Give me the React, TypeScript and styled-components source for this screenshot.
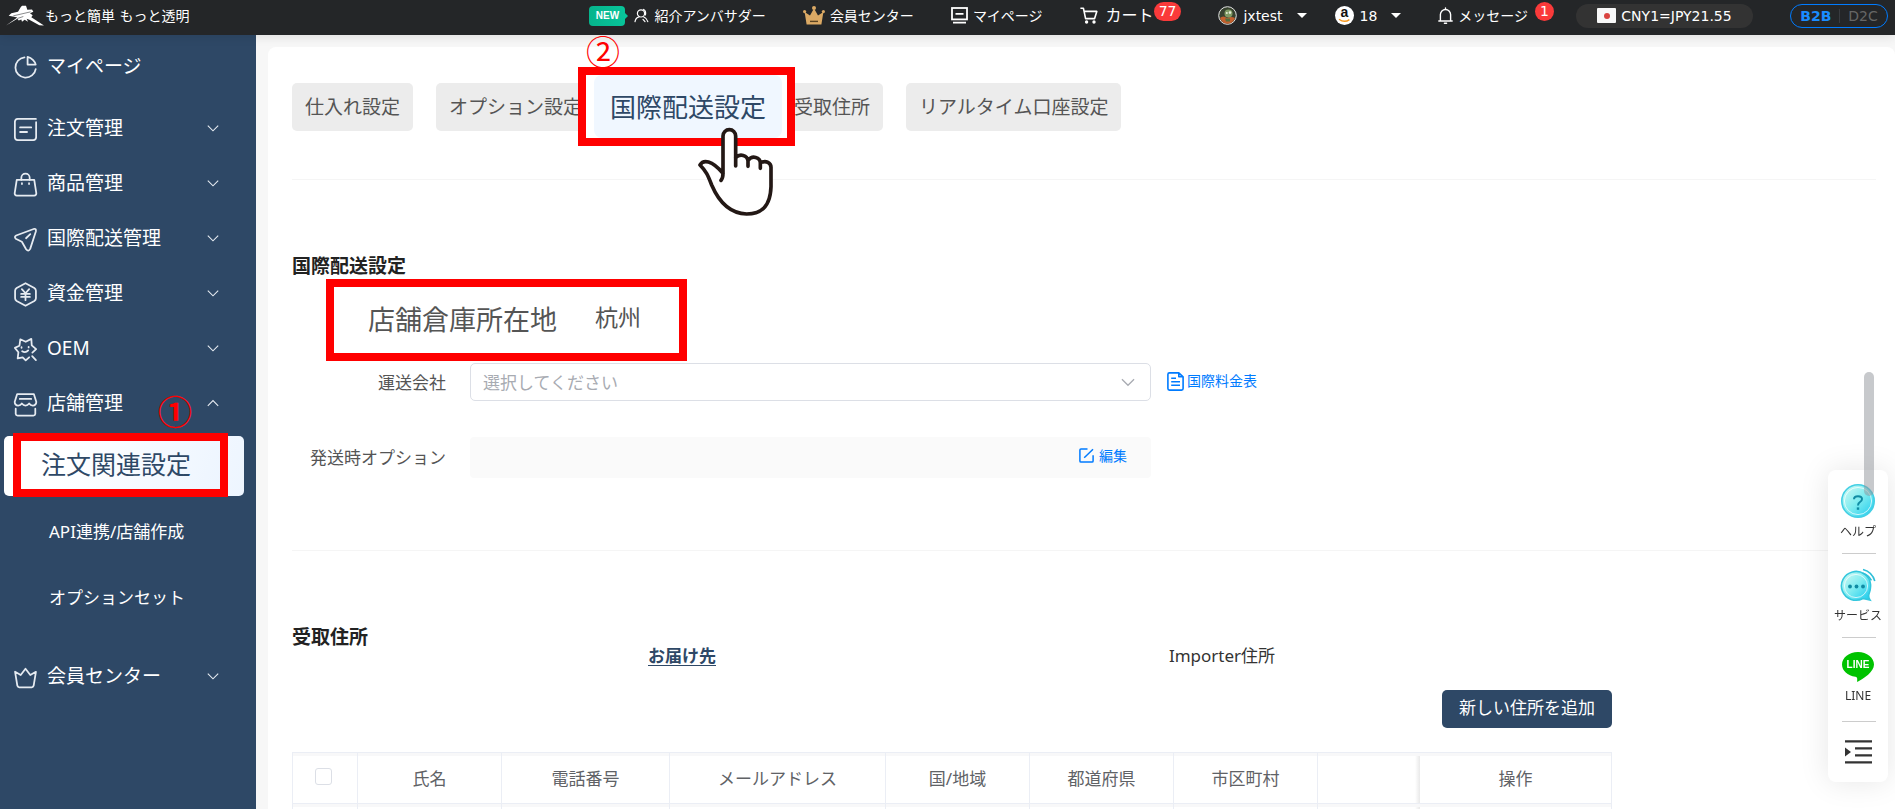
import React from "react";
import styled, { createGlobalStyle, css } from "styled-components";

const navy = "#2e4866";
const red = "#ff0000";
const blue = "#007bff";
const sans = `"Noto Sans", "Noto Sans CJK JP", sans-serif`;
const wide = `"DejaVu Sans", "Noto Sans CJK JP", sans-serif`;

const Global = createGlobalStyle`
  *, *::before, *::after { box-sizing: border-box; }
  html { scrollbar-width: none; }
  body { margin: 0; font-family: ${sans}; color: #333; background: #f7f7f7; }
  button, input, select { font: inherit; color: inherit; margin: 0; }
  button { border: 0; background: none; padding: 0; cursor: pointer; }
  a { color: inherit; text-decoration: none; }
  ul { list-style: none; margin: 0; padding: 0; }
  svg { display: block; flex: none; }
`;

const Shell = styled.div`
  display: flex;
  flex-direction: column;
  min-height: 100vh;
`;

/* ---------- header ---------- */

const Header = styled.header`
  display: flex;
  align-items: center;
  justify-content: space-between;
  flex: none;
  height: 35px;
  padding: 0 7px 4px 6px;
  background: #242628;
  color: #fff;
  font-family: ${wide};
  font-size: 14px;
  line-height: 22px;
  box-shadow: 0 2px 10px rgba(0, 0, 0, 0.1);
  position: sticky;
  top: 0;
  z-index: 2;
  white-space: nowrap;
`;

const Brand = styled.a`
  display: flex;
  align-items: center;
  gap: 1px;
`;

const Nav = styled.nav`
  display: flex;
  align-items: center;
  gap: 37px;
`;

const NavGroup = styled.div<{ $gap: number }>`
  display: flex;
  align-items: center;
  gap: ${(p) => p.$gap}px;
`;

const NavLink = styled.a<{ $gap?: number; $large?: boolean }>`
  display: flex;
  align-items: center;
  gap: ${(p) => p.$gap ?? 5}px;
  font-size: ${(p) => (p.$large ? 16 : 14)}px;
`;

const NavButton = styled.button`
  display: flex;
  align-items: center;
  gap: 6px;
`;

const Caret = styled.span`
  border: 5px solid transparent;
  border-top-color: #fff;
  border-bottom: 0;
  margin-left: 8px;
`;

const NewTag = styled.span`
  position: relative;
  width: 36px;
  height: 20px;
  border-radius: 4px;
  background: linear-gradient(90deg, #06b48c, #08c49a);
  font: 700 10px/20px "Liberation Sans", sans-serif;
  text-align: center;
  margin-right: 4px;
  &::after {
    content: "";
    position: absolute;
    left: 36px;
    top: 7px;
    border: 3px solid transparent;
    border-left-color: #08c49a;
  }
`;

const Count = styled.span<{ $inset?: boolean }>`
  align-self: flex-start;
  min-width: 18px;
  height: 19px;
  padding: 0 5px;
  border-radius: 10px;
  background: #fa3a3a;
  font-size: 14px;
  line-height: 18px;
  text-align: center;
  margin-left: ${(p) => (p.$inset ? -8 : 2)}px;
  margin-top: -3px;
`;

const Rate = styled.div`
  display: flex;
  align-items: center;
  justify-content: center;
  gap: 5px;
  width: 177px;
  height: 24px;
  border-radius: 12px;
  background: #333;
`;

const Flag = styled.span`
  display: grid;
  place-items: center;
  width: 19px;
  height: 15px;
  border-radius: 1px;
  background: #f8f8f8;
  &::after {
    content: "";
    width: 6px;
    height: 6px;
    border-radius: 50%;
    background: #d9433f;
  }
`;

const Mode = styled.div`
  display: flex;
  align-items: center;
  justify-content: center;
  width: 98px;
  height: 24px;
  border: 1px solid ${blue};
  border-radius: 12px;
`;

const ModeButton = styled.button<{ $on?: boolean }>`
  padding: 0 8px;
  line-height: 14px;
  color: ${(p) => (p.$on ? "#1a8cff" : "#666")};
  font-weight: ${(p) => (p.$on ? 700 : 400)};
  & + & {
    border-left: 1px solid #383b40;
  }
`;

/* ---------- sidebar ---------- */

const Body = styled.div`
  display: flex;
  flex: 1;
`;

const Sidebar = styled.aside`
  flex: none;
  width: 256px;
  padding-top: 3px;
  background: ${navy};
  color: #fff;
`;

const MenuLink = styled.button<{ $after?: number }>`
  display: flex;
  align-items: center;
  width: 100%;
  height: 55px;
  padding: 0 37px 0 13px;
  margin-bottom: ${(p) => p.$after ?? 0}px;
  gap: 9px;
  font-size: 19px;
  line-height: 28px;
  text-align: left;
  svg:first-child {
    position: relative;
    top: 2px;
  }
`;

const MenuText = styled.span`
  flex: 1;
  white-space: nowrap;
`;

const SubMenu = styled.ul`
  padding: 6px 12px 14px 4px;
`;

const SubItem = styled.li`
  position: relative;
  margin-bottom: 6px;
`;

const SubLink = styled.a<{ $on?: boolean }>`
  display: flex;
  align-items: center;
  height: 60px;
  padding-left: 45px;
  border-radius: 5px;
  font-size: 17px;
  line-height: 24px;
  ${(p) =>
    p.$on &&
    css`
      padding-left: 0;
      color: ${navy};
      background: linear-gradient(110deg, #fff 20%, #edf5ff);
    `}
`;

/* ---------- tutorial marks ---------- */

const markBox = css`
  border: 8px solid ${red};
  white-space: nowrap;
`;

const MenuMark = styled.span`
  ${markBox}
  position: absolute;
  left: 9px;
  top: -3px;
  width: 215px;
  height: 64px;
  padding-left: 20px;
  background: linear-gradient(110deg, #fff 20%, #edf5ff);
  font-size: 25px;
  line-height: 46px;
`;

const StepNumber = styled.span<{ $bold?: boolean }>`
  position: absolute;
  color: ${red};
  font-family: "Noto Sans CJK JP", sans-serif;
  font-size: 34px;
  line-height: 34px;
  font-weight: ${(p) => (p.$bold ? 700 : 400)};
`;

const MenuStep = styled(StepNumber)`
  right: 52px;
  top: -42px;
`;

/* ---------- main ---------- */

const Main = styled.main`
  flex: 1;
  min-width: 0;
  padding: 12px 0 0 12px;
  background: #f7f7f7;
`;

const Card = styled.div`
  min-height: 100%;
  padding: 36px 19px 0 24px;
  border-radius: 8px;
  background: #fff;
`;

const Tabs = styled.div`
  display: flex;
  gap: 23px;
  padding-bottom: 48px;
  border-bottom: 1px solid #f5f5f5;
`;

const Tab = styled.button`
  height: 48px;
  padding: 0 13px;
  border-radius: 5px;
  background: #ececec;
  color: #555;
  font-size: 19px;
  line-height: 28px;
  white-space: nowrap;
`;

const TabSlot = styled.div`
  position: relative;
  width: 140px;
`;

const TabMark = styled.div`
  ${markBox}
  position: absolute;
  left: -40px;
  top: -16px;
  width: 217px;
  height: 79px;
  padding: 0 5px 0 8px;
  background: #fff;
`;

const ActiveTab = styled.button`
  width: 100%;
  height: 63px;
  border-radius: 8px;
  background: #f0f7ff;
  color: ${navy};
  font-size: 26px;
  line-height: 36px;
`;

const TabStep = styled(StepNumber)`
  left: -32px;
  top: -49px;
  z-index: 3;
`;

const Pointer = styled.svg`
  position: absolute;
  left: 79px;
  top: 44px;
`;

const Section = styled.section<{ $ruled?: boolean }>`
  padding: 76px 0 72px;
  border-bottom: ${(p) => (p.$ruled ? "1px solid #f5f5f5" : "0")};
`;

const Title = styled.h2`
  margin: 0;
  color: #222;
  font-size: 19px;
  line-height: 20px;
  font-weight: 700;
`;

const Warehouse = styled.div`
  ${markBox}
  display: flex;
  align-items: center;
  gap: 38px;
  width: 361px;
  height: 82px;
  margin: 3px 0 2px 34px;
  padding: 0 0 0 34px;
  color: #555;
  font-size: 27px;
  line-height: 36px;
`;

const WarehouseCity = styled.span`
  font-size: 23px;
  line-height: 28px;
  margin-bottom: 6px;
`;

const Field = styled.div`
  display: flex;
  align-items: center;
  & + & {
    margin-top: 36px;
  }
`;

const FieldLabel = styled.label`
  flex: none;
  width: 178px;
  padding: 1px 24px 0 0;
  color: #555;
  font-size: 17px;
  line-height: 24px;
  text-align: right;
`;

const SelectWrap = styled.div`
  position: relative;
  flex: 0 1 681px;
  svg {
    position: absolute;
    right: 16px;
    top: 12px;
    pointer-events: none;
  }
`;

const Select = styled.select`
  display: block;
  width: 100%;
  height: 38px;
  padding: 0 12px;
  border: 1px solid #dcdfe6;
  border-radius: 5px;
  background: #fff;
  color: #a8abb2;
  font-size: 17px;
  appearance: none;
`;

const OptionBox = styled.div`
  display: flex;
  flex: 0 1 681px;
  align-items: center;
  justify-content: flex-end;
  height: 41px;
  padding: 0 24px 4px;
  border-radius: 4px;
  background: #fafafa;
`;

const actionStyle = css`
  display: flex;
  align-items: center;
  color: ${blue};
  font-size: 14px;
  line-height: 20px;
  white-space: nowrap;
`;

const PriceLink = styled.a`
  ${actionStyle}
  gap: 3px;
  margin-left: 16px;
  padding-bottom: 2px;
`;

const EditButton = styled.button`
  ${actionStyle}
  gap: 5px;
`;

const AddressPane = styled.div`
  width: 1320px;
  max-width: 100%;
`;

const AddressTabs = styled.div`
  display: grid;
  grid-template-columns: 1fr 1fr;
  justify-items: center;
  padding: 0 120px;
  margin-bottom: 25px;
`;

const AddressTab = styled.button<{ $on?: boolean }>`
  font-size: 17px;
  line-height: 18px;
  color: ${(p) => (p.$on ? navy : "#333")};
  font-weight: ${(p) => (p.$on ? 700 : 400)};
  text-decoration: ${(p) => (p.$on ? "underline" : "none")};
  text-underline-offset: 3px;
`;

const AddButton = styled.button`
  display: block;
  width: 170px;
  height: 38px;
  margin: 0 0 24px auto;
  padding-bottom: 2px;
  border-radius: 5px;
  background: ${navy};
  color: #fff;
  font-size: 17px;
  line-height: 24px;
`;

const Table = styled.table`
  width: 100%;
  table-layout: fixed;
  border-spacing: 0;
  border-top: 1px solid #ebeef5;
  border-left: 1px solid #ebeef5;
  color: #606266;
  font-size: 17px;
  line-height: 24px;
`;

const cell = css<{ $open?: boolean; $pinned?: boolean }>`
  position: relative;
  height: 51px;
  padding: 2px 0 0;
  border-right: ${(p) => (p.$open ? "0" : "1px solid #ebeef5")};
  border-bottom: 1px solid #ebeef5;
  box-shadow: inset 0 3px 0 #f8f8f9;
  text-align: center;
  font-weight: 400;
  ${(p) =>
    p.$pinned &&
    css`
      &::before {
        content: "";
        position: absolute;
        left: -5px;
        top: 3px;
        bottom: 0;
        width: 5px;
        background: linear-gradient(90deg, transparent, #e9e9e9);
      }
    `}
`;

const Th = styled.th`
  ${cell}
`;

const Td = styled.td`
  ${cell}
`;

const Check = styled.input`
  appearance: none;
  display: block;
  width: 17px;
  height: 17px;
  margin: 0 auto 5px 22px;
  border: 1px solid #dcdfe6;
  border-radius: 3px;
  background: #fff;
`;

/* ---------- floating parts ---------- */

const ScrollThumb = styled.div`
  position: fixed;
  z-index: 5;
  right: 21px;
  top: 372px;
  width: 10px;
  height: 124px;
  border-radius: 5px;
  background: rgba(144, 147, 153, 0.5);
`;

const Dock = styled.aside`
  position: fixed;
  z-index: 4;
  right: 7px;
  bottom: 27px;
  width: 60px;
  height: 312px;
  border-radius: 8px;
  background: #fff;
  box-shadow: 0 0 30px rgba(0, 0, 0, 0.1);
  color: #333;
  font-size: 12px;
`;

const DockItem = styled.button`
  position: relative;
  display: flex;
  flex-direction: column;
  align-items: center;
  justify-content: flex-start;
  width: 100%;
  height: 84px;
  padding-top: 14px;
  line-height: 18px;
  gap: 5px;
  white-space: nowrap;
  &::after {
    content: "";
    position: absolute;
    left: 14px;
    right: 12px;
    bottom: 0;
    height: 1px;
    background: #ccc;
  }
  &:last-child {
    height: 60px;
    padding-top: 18px;
  }
  &:last-child::after {
    display: none;
  }
`;

/* ---------- drawings ---------- */

const iconPaths: Record<string, React.ReactNode> = {
  pie: (
    <>
      <path d="M11 2.2A9.8 9.8 0 1 0 21.8 13.5" />
      <path d="M14 1.8V9.2H21.8C21.4 6.6 18.2 2.6 14 1.8Z" />
    </>
  ),
  order: (
    <>
      <path d="M22 1.8H4.5A3 3 0 0 0 1.8 4.5V19.5A3 3 0 0 0 4.5 22.2H19.5A3 3 0 0 0 22.2 19.5V5" />
      <path d="M6.8 10H17.5M6.8 14.4H13.5" />
    </>
  ),
  bag: (
    <>
      <path d="M3.6 7.5H20.4L22.4 20.5Q22.4 22.6 20.4 22.6H3.6Q1.6 22.6 1.6 20.5Z" />
      <path d="M8 7.5V5.5A4 4 0 0 1 16 5.5V7.5" />
      <path d="M8.6 10.8V11.6M15.4 10.8V11.6" />
    </>
  ),
  send: (
    <>
      <path d="M20.5 1.7L3 8.2Q.9 9.4 2.6 11.2L8.5 14.2L12.6 21.3Q14.8 24 16.5 21L22 4Q22.3 1.6 20.5 1.7Z" />
      <path d="M12.5 10.8L16.6 6.8" />
    </>
  ),
  yen: (
    <>
      <path d="M12 1.2L20.5 5.8Q22 6.8 22 8.4V15.6Q22 17.2 20.5 18.2L12 22.8L3.5 18.2Q2 17.2 2 15.6V8.4Q2 6.8 3.5 5.8Z" />
      <path d="M8.5 6.8L12 10.8L15.5 6.8M12 10.8V17.4M7.8 11.4H16.2M7.8 14.3H16.2" />
    </>
  ),
  oem: (
    <>
      <path d="M15.5 19.5L12.2 22.4L9.3 19.5L4.5 20.6L5.2 14.6L1.8 10.4L6.2 8.4L7 2.2L12.2 4.6L17.6 1.8L18 8L22.2 11.6L18.6 15" />
      <path d="M8.2 9.8V10.4M15 9.4V10M8.8 13.6Q12 15.8 14.6 12.8M18.4 18.4L22 22.2" />
    </>
  ),
  store: (
    <>
      <path d="M4 2H20L22.4 9.5Q22.2 13 19 13Q16.8 13 15.5 11Q14 13 12 13Q10 13 8.5 11Q7.2 13 5 13Q1.8 13 1.6 9.5Z" />
      <path d="M6.5 6.6H17.5M2.6 16V21Q2.8 22.6 4.4 22.6H19.6Q21.2 22.6 21.4 21V16" />
    </>
  ),
  crown: (
    <path d="M2 6.5L4.2 20Q4.6 21.4 6 21.4H18Q19.4 21.4 19.8 20L22 6.5L16.6 9.6L12 3.6L7.4 9.6Z" />
  ),
};

const LineIcon = ({ name }: { name: string }) => (
  <svg width="25" height="25" viewBox="0 0 24 24" fill="none" stroke="#e6ebf1" strokeWidth="1.7" strokeLinecap="round" strokeLinejoin="round" aria-hidden="true">
    {iconPaths[name]}
  </svg>
);

const Chevron = ({ up, color = "#e6ebf1", size = 12 }: { up?: boolean; color?: string; size?: number }) => (
  <svg width={size} height={size} viewBox="0 0 12 12" fill="none" stroke={color} strokeWidth="1.1" aria-hidden="true">
    <path d={up ? "M.8 8.8L6 3.6L11.2 8.8" : "M.8 3.6L6 8.8L11.2 3.6"} />
  </svg>
);

const Logo = () => (
  <svg width="38" height="21" viewBox="18 16 114 62" aria-hidden="true">
    <path fill="#fff" d="M18 77L52 53L42 51L26 48L34 40L54 36L62 22L66 18H78L82 30L96 29L100 36L90 40L98 46L94 52L132 77L118 76L88 60L80 57L84 66L74 60L66 66L64 59L56 62L52 57Z" />
    <path stroke="#242628" strokeWidth="1.6" d="M40 48L92 36M52 56L70 50" />
  </svg>
);

const Hand = () => (
  <Pointer width="77" height="90" viewBox="411 381 231 270" fill="#fff" stroke="#231815" strokeWidth="11" strokeLinecap="round" strokeLinejoin="round" aria-hidden="true">
    <path stroke="none" d="M489 518V408A19 19 0 0 1 527 408V470Q550 455 564 480Q585 462 601 487Q634 480 633 505V560C631 620 605 642 560 642C500 640 470 590 455 555C445 530 440 515 420 495C430 478 455 480 489 518Z" />
    <path fill="none" d="M483 541Q489 535 489 520V408A19 19 0 0 1 527 408V498M527 473C540 459 562 466 564 482V499M565 480C577 465 600 472 601 488V505M602 488C618 480 634 488 633 504V560C631 620 605 642 560 642C500 640 470 590 455 555C445 530 440 515 420 495C430 478 455 480 489 520" />
  </Pointer>
);

const Person = () => (
  <svg width="15" height="15" viewBox="0 0 15 15" fill="none" stroke="#fff" strokeWidth="1.2" strokeLinecap="round" aria-hidden="true">
    <circle cx="7" cy="5.4" r="3.6" />
    <path d="M1 13.6Q1.6 9.8 5 8.8M13.8 13.6Q13 10.4 9.6 8.8M9.6 1.4Q12.4 3 11.4 7M9 11.4L11 13.6" />
  </svg>
);

const GoldCrown = () => (
  <svg width="22" height="20" viewBox="0 0 22 20" aria-hidden="true">
    <path fill="#dba964" d="M1.6 6L7 9.6L10.4 3.4H11.6L15 9.6L20.4 6L18.4 18.4H3.6Z" />
    <circle cx="11" cy="2" r="2" fill="#dba964" />
    <circle cx="1.6" cy="5.6" r="1.6" fill="#dba964" />
    <circle cx="20.4" cy="5.6" r="1.6" fill="#dba964" />
    <path d="M7 15.4H15" stroke="#5b4422" strokeWidth="1.4" />
  </svg>
);

const Monitor = () => (
  <svg width="17" height="17" viewBox="0 0 17 17" fill="none" stroke="#fff" aria-hidden="true">
    <rect x="1" y="1" width="15" height="11.4" strokeWidth="1.8" />
    <path d="M4.5 6.8H12.5M2 15.6H15" strokeWidth="1.8" />
  </svg>
);

const Cart = () => (
  <svg width="18" height="17" viewBox="0 0 18 17" fill="none" stroke="#fff" strokeWidth="1.6" strokeLinejoin="round" aria-hidden="true">
    <path d="M.4 1.2H3.4L5.6 11.6H14.6L16.8 4.4H4.2" />
    <circle cx="6.6" cy="15" r=".9" />
    <circle cx="14" cy="15" r=".9" />
  </svg>
);

const Avatar = () => (
  <svg width="19" height="19" viewBox="0 0 19 19" aria-hidden="true">
    <circle cx="9.5" cy="9.5" r="8.8" fill="#38422f" stroke="#e4e4e4" strokeWidth="1" />
    <path d="M2 12Q5 9 9 12Q13 10 17 12Q15 17.6 9.5 17.8Q4 17.6 2 12Z" fill="#c4602e" />
    <circle cx="10.5" cy="7.4" r="4" fill="#7f9a63" />
    <circle cx="12" cy="6.6" r="1.3" fill="#e8edd8" />
    <circle cx="8.8" cy="7" r="1" fill="#e8edd8" />
    <path d="M7 12.6H12V15.4H8Z" fill="#54703f" />
  </svg>
);

const Amazon = () => (
  <svg width="19" height="19" viewBox="0 0 19 19" aria-hidden="true">
    <circle cx="9.5" cy="9.5" r="9.5" fill="#fff" />
    <text x="9.5" y="11.4" textAnchor="middle" fontFamily="Liberation Sans, sans-serif" fontWeight="700" fontSize="14" fill="#111">a</text>
    <path d="M4 13.2Q9.5 17.2 14.4 13.6" fill="none" stroke="#f7981d" strokeWidth="1.4" />
  </svg>
);

const Bell = () => (
  <svg width="15" height="17" viewBox="0 0 15 17" fill="none" stroke="#fff" strokeWidth="1.4" strokeLinecap="round" aria-hidden="true">
    <path d="M.8 14H14.2M2.4 13.6V7.6A5.1 5.1 0 0 1 12.6 7.6V13.6M7.5 2.2V1M6.4 16.2H8.6" />
  </svg>
);

const DocIcon = () => (
  <svg width="17" height="19" viewBox="0 0 17 19" fill="none" stroke={blue} strokeWidth="1.6" strokeLinejoin="round" aria-hidden="true">
    <path d="M11.8.9H2.4Q.9.9.9 2.4V16.6Q.9 18.1 2.4 18.1H14.6Q16.1 18.1 16.1 16.6V4.8ZM11.8.9V4.8H16.1" />
    <path d="M4.2 6.2H9M4.2 9.7H13M4.2 13.2H13" />
  </svg>
);

const EditIcon = () => (
  <svg width="15" height="15" viewBox="0 0 15 15" fill="none" stroke={blue} strokeWidth="1.5" aria-hidden="true">
    <path d="M8.5.9H2Q.9.9.9 2V13Q.9 14.1 2 14.1H13Q14.1 14.1 14.1 13V7.2M5.2 9.8L14 1.2" />
  </svg>
);

const DockGradient = ({ id }: { id: string }) => (
  <defs>
    <linearGradient id={id} x1="0" y1="0" x2="1" y2="1">
      <stop offset="0" stopColor="#d9fbf4" />
      <stop offset=".5" stopColor="#7fecf0" />
      <stop offset="1" stopColor="#16c9ee" />
    </linearGradient>
  </defs>
);

const HelpIcon = () => (
  <svg width="34" height="34" viewBox="0 0 34 34" aria-hidden="true">
    <DockGradient id="help" />
    <circle cx="17" cy="17" r="16.2" fill="url(#help)" stroke="#43cfe4" strokeWidth="1.6" />
    <circle cx="17" cy="17" r="13.6" fill="none" stroke="#fff" strokeOpacity=".7" />
    <path d="M13 15.2Q13 12.2 17 12.2Q21 12.2 21 15Q21 16.8 19 18Q17 19.2 17 21.6" fill="none" stroke="#108ba3" strokeWidth="2" />
    <rect x="15.8" y="23.4" width="2.4" height="2.4" fill="#108ba3" />
  </svg>
);

const ServiceIcon = () => (
  <svg width="36" height="34" viewBox="0 0 36 34" aria-hidden="true">
    <DockGradient id="service" />
    <path d="M29 26Q31 21 30.5 16A14.6 14.4 0 1 0 23 30.5L30 32Q28 29 29 26Z" fill="url(#service)" stroke="#35c7dd" strokeWidth="1.6" />
    <circle cx="16" cy="18" r="11.6" fill="none" stroke="#fff" strokeOpacity=".7" />
    <g fill="#108ba3">
      <circle cx="10" cy="18.5" r="1.9" />
      <circle cx="16.5" cy="18.5" r="1.9" />
      <circle cx="23" cy="18.5" r="1.9" />
    </g>
    <path d="M23 1.4Q32.4 4 34.8 13M22.4 5Q28.6 7 31.4 12.4" fill="none" stroke="#2fbfd8" strokeWidth="1.6" />
  </svg>
);

const LineLogo = () => (
  <svg width="32" height="30" viewBox="0 0 32 30" aria-hidden="true">
    <path fill="#00c300" d="M16 0C7 0 0 5.6 0 12.6C0 18.8 5.6 23.8 13.4 24.8C16 25.4 15 27.6 15.2 30C22 26.4 32 20 32 12.6C32 5.6 25 0 16 0Z" />
    <text x="16" y="16.4" textAnchor="middle" fontFamily="Liberation Sans, sans-serif" fontWeight="700" fontSize="10" fill="#fff">LINE</text>
  </svg>
);

const Unfold = () => (
  <svg width="27" height="24" viewBox="0 0 27 24" aria-hidden="true">
    <path d="M0 1.4H27M10 8.4H27M10 15.4H27M0 22.4H27" stroke="#333" strokeWidth="2.2" />
    <path d="M0 7.6L6 12L0 16.4Z" fill="#333" />
  </svg>
);

/* ---------- page ---------- */

const mainMenu = [
  { icon: "order", label: "注文管理" },
  { icon: "bag", label: "商品管理" },
  { icon: "send", label: "国際配送管理" },
  { icon: "yen", label: "資金管理" },
  { icon: "oem", label: "OEM" },
  { icon: "store", label: "店舗管理", open: true },
];

const columns = [
  { label: "氏名", width: 144 },
  { label: "電話番号", width: 168 },
  { label: "メールアドレス", width: 216 },
  { label: "国/地域", width: 144 },
  { label: "都道府県", width: 144 },
  { label: "市区町村", width: 144 },
  { label: "", width: 102 },
  { label: "操作", width: 192 },
];

const TopBar = () => (
  <Header>
    <Brand href="#">
      <Logo />
      もっと簡単 もっと透明
    </Brand>
    <Nav>
      <NavLink href="#">
        <NewTag>NEW</NewTag>
        <Person />
        紹介アンバサダー
      </NavLink>
      <NavLink href="#">
        <GoldCrown />
        会員センター
      </NavLink>
      <NavLink href="#">
        <Monitor />
        マイページ
      </NavLink>
      <NavLink href="#" $gap={8} $large>
        <Cart />
        カート
        <Count $inset>77</Count>
      </NavLink>
      <NavGroup $gap={28}>
        <NavButton type="button">
          <Avatar />
          jxtest
          <Caret />
        </NavButton>
        <NavButton type="button">
          <Amazon />
          18
          <Caret />
        </NavButton>
      </NavGroup>
      <NavGroup $gap={22}>
        <NavLink href="#">
          <Bell />
          メッセージ
          <Count>1</Count>
        </NavLink>
        <Rate>
          <Flag />
          CNY1=JPY21.55
        </Rate>
      </NavGroup>
      <Mode>
        <ModeButton type="button" $on>B2B</ModeButton>
        <ModeButton type="button">D2C</ModeButton>
      </Mode>
    </Nav>
  </Header>
);

const SideMenu = () => (
  <Sidebar>
    <MenuLink type="button" $after={7}>
      <LineIcon name="pie" />
      <MenuText>マイページ</MenuText>
    </MenuLink>
    {mainMenu.map((m) => (
      <MenuLink type="button" key={m.icon}>
        <LineIcon name={m.icon} />
        <MenuText>{m.label}</MenuText>
        <Chevron up={m.open} />
      </MenuLink>
    ))}
    <SubMenu>
      <SubItem>
        <SubLink href="#" $on>
          <MenuMark>注文関連設定</MenuMark>
        </SubLink>
        <MenuStep $bold>①</MenuStep>
      </SubItem>
      <SubItem>
        <SubLink href="#">API連携/店舗作成</SubLink>
      </SubItem>
      <SubItem>
        <SubLink href="#">オプションセット</SubLink>
      </SubItem>
    </SubMenu>
    <MenuLink type="button">
      <LineIcon name="crown" />
      <MenuText>会員センター</MenuText>
      <Chevron />
    </MenuLink>
  </Sidebar>
);

const App = () => (
  <Shell>
    <Global />
    <TopBar />
    <Body>
      <SideMenu />
      <Main>
        <Card>
          <Tabs>
            <Tab type="button">仕入れ設定</Tab>
            <Tab type="button">オプション設定</Tab>
            <TabSlot>
              <TabMark>
                <ActiveTab type="button">国際配送設定</ActiveTab>
              </TabMark>
              <TabStep>②</TabStep>
              <Hand />
            </TabSlot>
            <Tab type="button">受取住所</Tab>
            <Tab type="button">リアルタイム口座設定</Tab>
          </Tabs>

          <Section $ruled>
            <Title>国際配送設定</Title>
            <Warehouse>
              店舗倉庫所在地
              <WarehouseCity>杭州</WarehouseCity>
            </Warehouse>
            <Field>
              <FieldLabel htmlFor="carrier">運送会社</FieldLabel>
              <SelectWrap>
                <Select id="carrier" defaultValue="">
                  <option value="">選択してください</option>
                </Select>
                <Chevron color="#a8abb2" size={14} />
              </SelectWrap>
              <PriceLink href="#">
                <DocIcon />
                国際料金表
              </PriceLink>
            </Field>
            <Field>
              <FieldLabel as="span">発送時オプション</FieldLabel>
              <OptionBox>
                <EditButton type="button">
                  <EditIcon />
                  編集
                </EditButton>
              </OptionBox>
            </Field>
          </Section>

          <Section>
            <Title>受取住所</Title>
            <AddressPane>
              <AddressTabs>
                <AddressTab type="button" $on>お届け先</AddressTab>
                <AddressTab type="button">Importer住所</AddressTab>
              </AddressTabs>
              <AddButton type="button">新しい住所を追加</AddButton>
              <Table>
                <colgroup>
                  <col width={65} />
                  {columns.map((c) => (
                    <col key={c.label} width={c.width} />
                  ))}
                </colgroup>
                <thead>
                  <tr>
                    <Th>
                      <Check type="checkbox" aria-label="すべて選択" />
                    </Th>
                    {columns.map((c) => (
                      <Th key={c.label} $open={!c.label} $pinned={c.label === "操作"}>
                        {c.label}
                      </Th>
                    ))}
                  </tr>
                </thead>
                <tbody>
                  <tr>
                    <Td />
                    {columns.map((c) => (
                      <Td key={c.label} $open={!c.label} $pinned={c.label === "操作"} />
                    ))}
                  </tr>
                </tbody>
              </Table>
            </AddressPane>
          </Section>
        </Card>
      </Main>
    </Body>
    <ScrollThumb />
    <Dock>
      <DockItem type="button">
        <HelpIcon />
        ヘルプ
      </DockItem>
      <DockItem type="button">
        <ServiceIcon />
        サービス
      </DockItem>
      <DockItem type="button">
        <LineLogo />
        LINE
      </DockItem>
      <DockItem type="button" aria-label="メニューを開く">
        <Unfold />
      </DockItem>
    </Dock>
  </Shell>
);

export default App;
